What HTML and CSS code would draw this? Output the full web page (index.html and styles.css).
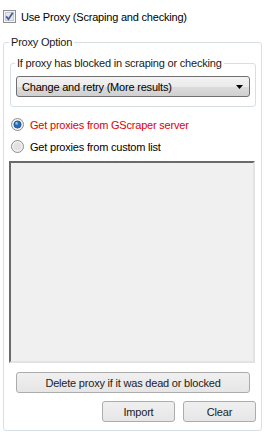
FILE: index.html
```html
<!DOCTYPE html>
<html>
<head>
    <title>Proxy Settings</title>
    <link rel="stylesheet" href="styles.css">
</head>
<body>
    <div class="panel">
        <label class="check-row">
            <svg class="checkbox" width="13" height="13" viewBox="0 0 13 13">
                <rect x="0.5" y="0.5" width="12" height="12" fill="#f4f4f4" stroke="#8f8f8f"/>
                <rect x="2.5" y="2.5" width="8" height="8" fill="#e4e8ee" stroke="#c4cad3"/>
                <path d="M3.2 6.4 L5.4 9.2 L9.8 2.8" fill="none" stroke="#4a5f97" stroke-width="1.8"/>
            </svg>
            <span>Use Proxy (Scraping and checking)</span>
        </label>

        <fieldset class="group outer">
            <legend>Proxy Option</legend>

            <fieldset class="group inner">
                <legend>If proxy has blocked in scraping or checking</legend>
                <div class="combo">
                    <span>Change and retry (More results)</span>
                    <svg width="7" height="4" viewBox="0 0 7 4"><path d="M0 0 H7 L3.5 4 Z" fill="#000"/></svg>
                </div>
            </fieldset>

            <label class="radio-row selected">
                <svg class="radio" width="13" height="13" viewBox="0 0 13 13">
                    <circle cx="6.5" cy="6.5" r="6" fill="#f2f2f2" stroke="#8c8c8c"/>
                    <circle cx="6.5" cy="6.5" r="3.6" fill="#2a6bb6" stroke="#1d4d86" stroke-width="0.8"/>
                    <circle cx="5.6" cy="5.4" r="1.3" fill="#8ec3ef"/>
                </svg>
                <span>Get proxies from GScraper server</span>
            </label>
            <label class="radio-row">
                <svg class="radio" width="13" height="13" viewBox="0 0 13 13">
                    <circle cx="6.5" cy="6.5" r="6" fill="#f2f2f2" stroke="#8c8c8c"/>
                    <circle cx="6.5" cy="6.5" r="4" fill="#e2e2e2"/>
                </svg>
                <span>Get proxies from custom list</span>
            </label>

            <div class="list-box"></div>

            <button class="btn wide">Delete proxy if it was dead or blocked</button>

            <div class="btn-row">
                <button class="btn small">Import</button>
                <button class="btn small">Clear</button>
            </div>
        </fieldset>
    </div>
</body>
</html>
```

FILE: styles.css
```css
body {
    margin: 0;
    background: #fff;
    color: #000;
    font-family: 'Liberation Sans', Arial, sans-serif;
    font-size: 11px;
    letter-spacing: -0.2px;
}
.panel {
    padding-top: 10px;
}
.check-row {
    display: flex;
    align-items: center;
    height: 13px;
    padding-left: 3px;
}
.check-row span {
    margin-left: 5px;
}
.checkbox {
    display: block;
}
.group {
    border: 1px solid #d5dfe5;
    border-radius: 3px;
    margin: 0;
}
.group legend {
    padding: 0 2px;
    margin-left: -1px;
    line-height: 14px;
    color: #1a1a1a;
}
.outer {
    margin: 12px 3px 0 3px;
    padding: 0 5px 8px 6px;
}
.inner {
    margin-top: 7px;
    padding: 0 5px 9px 5px;
}
.combo {
    display: flex;
    align-items: center;
    justify-content: space-between;
    height: 19px;
    margin-top: 6px;
    padding: 0 6px 0 5px;
    border: 1px solid #707070;
    border-radius: 3px;
    background: linear-gradient(#f3f3f3, #eaeaea 50%, #dcdcdc 51%, #d0d0d0);
}
.combo svg {
    display: block;
}
.radio-row {
    display: flex;
    align-items: center;
    height: 13px;
    margin-top: 9px;
    padding-left: 1px;
}
.radio-row.selected {
    margin-top: 11px;
}
.radio-row span {
    margin-left: 6px;
}
.radio-row.selected span {
    color: #e00000;
}
.radio {
    display: block;
}
.list-box {
    height: 198px;
    margin: 8px 1px 0 -1px;
    background: #f0f0f0;
    border: 2px solid;
    border-color: #6a6a6a #e3e3e3 #e3e3e3 #6a6a6a;
}
.btn {
    display: block;
    height: 21px;
    padding: 0;
    border: 1px solid #acacac;
    border-radius: 3px;
    background: linear-gradient(#f0f0f0, #e6e6e6);
    font-family: inherit;
    font-size: 11px;
    letter-spacing: -0.2px;
    color: #222;
}
.wide {
    width: 234px;
    margin: 9px 0 0 6px;
}
.btn-row {
    display: flex;
    justify-content: flex-end;
    gap: 8px;
    margin-top: 8px;
}
.small {
    width: 73px;
}
```
